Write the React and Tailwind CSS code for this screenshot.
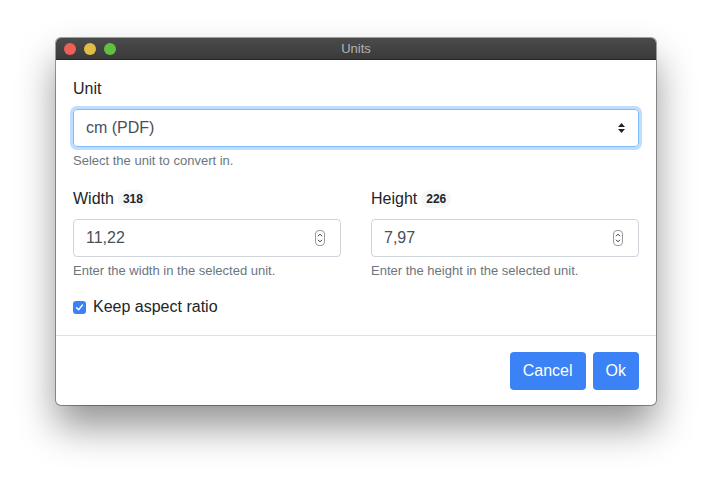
import React from "react";

function Stepper() {
  return (
    <svg width="10" height="16" viewBox="0 0 10 16" className="shrink-0">
      <rect x="0.5" y="0.5" width="9" height="15" rx="3.5" fill="#fff" stroke="#9a9a9a" />
      <path d="M3 6.2 L5 4.2 L7 6.2" fill="none" stroke="#333" strokeWidth="1" />
      <path d="M3 9.8 L5 11.8 L7 9.8" fill="none" stroke="#333" strokeWidth="1" />
    </svg>
  );
}

function SelectArrows() {
  return (
    <svg width="9" height="12" viewBox="0 0 9 12" className="shrink-0">
      <path d="M4.5 1 L8 5 L1 5 Z" fill="#222" />
      <path d="M4.5 11 L8 7 L1 7 Z" fill="#222" />
    </svg>
  );
}

function NumberField({ label, badge, value, help }) {
  return (
    <div className="flex flex-col">
      <div className="flex items-center text-[16px] leading-[24px] text-[#212529] mb-2">
        <span>{label}</span>
        <span className="ml-[4px] px-[5px] rounded-full bg-[#f5f6f7] text-[12px] leading-[18px] font-bold text-[#212529]">
          {badge}
        </span>
      </div>
      <div className="h-[38px] border border-[#ced4da] rounded-[4px] flex items-center pl-[12px] pr-[15px] justify-between bg-white">
        <span className="text-[16px] text-[#495057]">{value}</span>
        <Stepper />
      </div>
      <div className="mt-1 text-[13px] leading-[19.5px] text-[#6c757d]">{help}</div>
    </div>
  );
}

export default function App() {
  return (
    <div
      className="w-[712px] h-[479px] bg-white pl-[56px] pt-[38px] overflow-hidden"
      style={{ fontFamily: '"Liberation Sans", Arial, sans-serif' }}
    >
      <div className="w-[600px] rounded-[5px] bg-white overflow-hidden shadow-[0_22px_38px_rgba(0,0,0,0.42),0_0_0_1px_rgba(0,0,0,0.35)]">
        <div className="h-[22px] bg-gradient-to-b from-[#4b4b4b] to-[#3a3a3a] border-b border-[#262626] flex items-center relative">
          <div className="flex items-center gap-[8px] pl-[8px]">
            <span className="w-[12px] h-[12px] rounded-full bg-[#ee5f57]" />
            <span className="w-[12px] h-[12px] rounded-full bg-[#e0bd45]" />
            <span className="w-[12px] h-[12px] rounded-full bg-[#5fc13f]" />
          </div>
          <div className="absolute inset-0 flex items-center justify-center text-[13px] text-[#b4b4b4]">
            Units
          </div>
        </div>

        <div className="px-[17px] pt-[17px] pb-4">
          <div className="mb-4">
            <div className="text-[16px] leading-[24px] text-[#212529] mb-2">Unit</div>
            <div className="h-[38px] border border-[#80bdff] rounded-[4px] shadow-[0_0_0_3px_rgba(0,123,255,0.25)] flex items-center justify-between pl-[12px] pr-[12px]">
              <span className="text-[16px] text-[#495057]">cm (PDF)</span>
              <SelectArrows />
            </div>
            <div className="mt-1 text-[13px] leading-[19.5px] text-[#6c757d]">
              Select the unit to convert in.
            </div>
          </div>

          <div className="grid grid-cols-2 gap-x-[30px] mb-[15px]">
            <NumberField
              label="Width"
              badge="318"
              value="11,22"
              help="Enter the width in the selected unit."
            />
            <NumberField
              label="Height"
              badge="226"
              value="7,97"
              help="Enter the height in the selected unit."
            />
          </div>

          <div className="flex items-center h-[24px]">
            <span className="w-[13px] h-[13px] rounded-[3px] bg-[#3b82f6] flex items-center justify-center">
              <svg width="9" height="9" viewBox="0 0 9 9">
                <path d="M1.5 4.8 L3.6 6.8 L7.5 2" fill="none" stroke="#fff" strokeWidth="1.4" strokeLinecap="round" strokeLinejoin="round" />
              </svg>
            </span>
            <span className="ml-[7px] text-[16px] text-[#212529]">Keep aspect ratio</span>
          </div>
        </div>

        <div className="border-t border-[#dee2e6] px-[17px] pt-4 pb-[15px] flex justify-end gap-[7px]">
          <button className="h-[38px] px-[13px] rounded-[4px] bg-[#3b82f6] text-white text-[16px]">
            Cancel
          </button>
          <button className="h-[38px] px-[13px] rounded-[4px] bg-[#3b82f6] text-white text-[16px]">
            Ok
          </button>
        </div>
      </div>
    </div>
  );
}
